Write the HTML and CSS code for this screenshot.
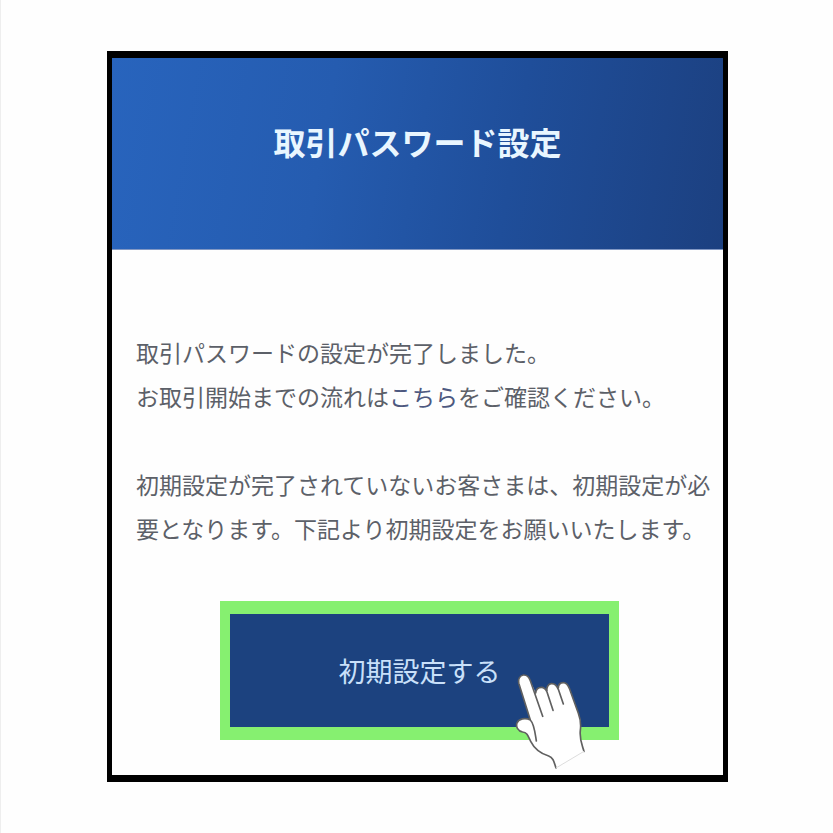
FILE: index.html
```
<!DOCTYPE html>
<html lang="ja">

<head>
    <meta charset="UTF-8">
    <meta name="viewport" content="width=device-width, initial-scale=1.0">
    <title>取引パスワード設定</title>
    <link rel="stylesheet" href="styles.css">
</head>

<body>
    <main class="card">
        <header class="head">
            <h1>取引パスワード設定</h1>
        </header>
        <div class="text">
            <p>取引パスワードの設定が完了しました。<br>お取引開始までの流れは<a href="#">こちら</a>をご確認ください。</p>
            <p>初期設定が完了されていないお客さまは、初期設定が必要となります。下記より初期設定をお願いいたします。</p>
        </div>
        <div class="action">
            <button type="button" class="btn">初期設定する</button>
            <svg class="hand" viewBox="0 0 330 360" aria-hidden="true">
                <path class="fill" d="M168 324C162 306 160 293 146 288C120 280 102 264 92 244C84 228 82 217 68 216C54 214 47 200 51 189C56 176 76 172 91 180L57 72C53 58 59 47 70 45C81 44 87 51 91 62L107 99C108 88 115 82 124 82C132 82 137 87 141 93C139 81 145 72 154 71C164 70 170 76 175 84C175 74 181 68 190 68C200 68 204 75 208 85L235 160C242 179 244 189 241 211C238 238 245 251 252 274Z" />
                <path class="line" d="M168 324C162 306 160 293 146 288C120 280 102 264 92 244C84 228 82 217 68 216C54 214 47 200 51 189C56 176 76 172 91 180C103 192 105 218 109 243M91 180L57 72C53 58 59 47 70 45C81 44 87 51 91 62L128 169M107 99C108 88 115 82 124 82C132 82 137 87 141 96L159 151M141 93C139 81 145 72 154 71C164 70 170 76 175 88L190 132M175 84C175 74 181 68 190 68C200 68 204 75 208 85L235 160C242 179 244 189 241 211C238 238 245 251 252 274" />
                <path class="wrist" d="M168 324L252 274" />
            </svg>
        </div>
    </main>
</body>

</html>
```
FILE: styles.css
```
*{margin:0;padding:0;box-sizing:border-box;}
body{background:#fefefe;border-left:1px solid #eee;padding:51px 105px 51px 106px;font-family:"Noto Sans CJK JP",sans-serif;}
.card{border:solid #000;border-width:7px 5px;background:#fefefe;}
.head{display:flex;align-items:center;justify-content:center;padding:59px 0 84px;background:linear-gradient(100deg,#2864bd 0%,#255cb0 35%,#1f4e9a 65%,#1c4080 100%);border-bottom:1px solid #8298c4;}
h1{font-size:32px;line-height:48px;font-weight:700;color:#e9f6ff;}
.text{padding:80px 10px 51px 24px;font-size:23px;line-height:44px;color:#5c6068;}
.text p + p{margin-top:44px;}
.text a{color:#4d5880;text-decoration:none;}
.action{position:relative;margin:0 104px 35px 108px;}
.btn{display:block;width:100%;padding:36px 0;border:solid #86f070;border-width:13px 10px;background:#1c427f;color:#c9e0fa;font-family:inherit;font-size:27px;line-height:41px;cursor:pointer;}
/* 指カーソル */
.hand{position:absolute;right:9px;bottom:-40px;width:110px;height:120px;pointer-events:none;}
.hand path{stroke-linecap:round;stroke-linejoin:round;}
.fill{fill:#fff;}
.line{fill:none;stroke:#606060;stroke-width:5;}
.wrist{fill:none;stroke:#ddd;stroke-width:3;}
```
